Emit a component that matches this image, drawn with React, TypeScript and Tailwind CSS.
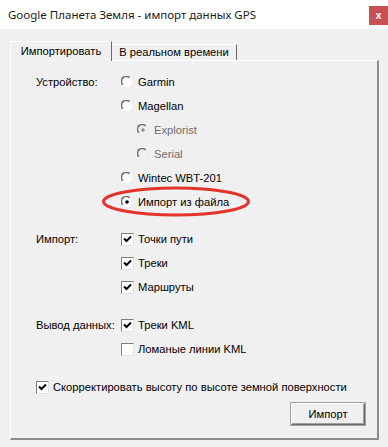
import React from "react";

const font = { fontFamily: '"Liberation Sans", Arial, sans-serif' };

function Radio({ checked = false, disabled = false }: { checked?: boolean; disabled?: boolean }) {
  return (
    <svg width="12" height="12" viewBox="0 0 12 12" className="shrink-0">
      <circle cx="6" cy="6" r="5.5" fill={disabled ? "#f0f0f0" : "#ffffff"} />
      {/* sunken edge: dark top-left, light bottom-right */}
      <path d="M1.2 9 A5.3 5.3 0 0 1 9 1.2" fill="none" stroke="#8a8a8a" strokeWidth="1" />
      <path d="M2 8.6 A4.4 4.4 0 0 1 8.6 2" fill="none" stroke="#404040" strokeWidth="1" />
      <path d="M10.8 3 A5.3 5.3 0 0 1 3 10.8" fill="none" stroke="#e3e3e3" strokeWidth="1" />
      {checked && <circle cx="6" cy="6" r="1.8" fill={disabled ? "#8d8d8d" : "#000000"} />}
    </svg>
  );
}

function Check({ checked = false }: { checked?: boolean }) {
  return (
    <span className="w-[13px] h-[13px] shrink-0 bg-white border border-t-[#808080] border-l-[#808080] border-r-[#e3e3e3] border-b-[#e3e3e3] flex items-center justify-center">
      {checked && (
        <svg width="9" height="9" viewBox="0 0 9 9">
          <path d="M1 3.5 L3.5 6 L8 1.5" fill="none" stroke="#000" strokeWidth="2" />
        </svg>
      )}
    </span>
  );
}

function RadioRow({
  label,
  checked,
  disabled,
  indent,
}: {
  label: string;
  checked?: boolean;
  disabled?: boolean;
  indent?: boolean;
}) {
  return (
    <div className={`h-6 flex items-center gap-[5px] whitespace-nowrap ${indent ? "pl-4" : ""}`}>
      <Radio checked={checked} disabled={disabled} />
      <span className={disabled ? "text-[#6d6d6d]" : "text-black"}>{label}</span>
    </div>
  );
}

function CheckRow({ label, checked }: { label: string; checked?: boolean }) {
  return (
    <div className="h-6 flex items-center gap-[4px] whitespace-nowrap">
      <Check checked={checked} />
      <span>{label}</span>
    </div>
  );
}

export default function App() {
  return (
    <div className="w-[388px] h-[447px] bg-[#f0f0f0] overflow-hidden text-[11.2px] text-black" style={font}>
      {/* Title bar */}
      <div className="h-[29px] bg-white flex items-start justify-between">
        <div
          className="pl-2 pt-[6px] text-[11.5px] text-[#1a1a1a] whitespace-nowrap"
          style={{ fontFamily: '"Noto Sans", "Open Sans", sans-serif' }}
        >
          Google Планета Земля - импорт данных GPS
        </div>
        <div className="mt-[6px] w-[19px] h-[19px] bg-[#c75050] flex items-center justify-center text-white text-[11px] font-bold leading-none">
          x
        </div>
      </div>

      <div className="pl-[10px] pr-[9px] pt-3">
        {/* Tabs */}
        <div className="flex items-end h-[19px]">
          <div className="relative z-10 h-[20px] w-[102px] -mb-px bg-[#f0f0f0] border-l border-t border-white border-r border-r-[#696969] flex items-center justify-center pb-px">
            Импортировать
          </div>
          <div className="h-[16px] w-[125px] border-t border-white border-r border-r-[#696969] flex items-center justify-center">
            В реальном времени
          </div>
        </div>

        {/* Panel */}
        <div className="h-[380px] border-l border-t border-white border-r-2 border-r-[#8c8c8c] border-b-2 border-b-[#8c8c8c] pl-[25px] pr-[11px] pt-[9px] flex flex-col">
          <div className="flex">
            <div className="w-[85px] h-6 flex items-center">Устройство:</div>
            <div className="flex flex-col">
              <RadioRow label="Garmin" />
              <RadioRow label="Magellan" />
              <RadioRow label="Explorist" checked disabled indent />
              <RadioRow label="Serial" disabled indent />
              <RadioRow label="Wintec WBT-201" />
              <div className="relative">
                <RadioRow label="Импорт из файла" checked />
                <svg
                  className="absolute left-[-20px] top-[-4px] pointer-events-none"
                  width="150"
                  height="31"
                  viewBox="0 0 150 31"
                >
                  <ellipse cx="75" cy="15.5" rx="72.5" ry="13.5" fill="none" stroke="#e2342d" strokeWidth="3" />
                </svg>
              </div>
            </div>
          </div>

          <div className="flex mt-[13px]">
            <div className="w-[85px] h-6 flex items-center">Импорт:</div>
            <div className="flex flex-col">
              <CheckRow label="Точки пути" checked />
              <CheckRow label="Треки" checked />
              <CheckRow label="Маршруты" checked />
            </div>
          </div>

          <div className="flex mt-[14px]">
            <div className="w-[85px] h-6 flex items-center whitespace-nowrap">Вывод данных:</div>
            <div className="flex flex-col">
              <CheckRow label="Треки KML" checked />
              <CheckRow label="Ломаные линии KML" />
            </div>
          </div>

          <div className="mt-[14px]">
            <CheckRow label="Скорректировать высоту по высоте земной поверхности" checked />
          </div>

          <div className="mt-1 flex justify-end pr-[1px]">
            <button className="w-[74px] h-[22px] bg-[#f0f0f0] border border-t-white border-l-white border-r-[#696969] border-b-[#696969] shadow-[inset_-1px_-1px_0_#a0a0a0,0_0_0_1px_#a0a0a0] flex items-center justify-center">
              Импорт
            </button>
          </div>
        </div>
      </div>
    </div>
  );
}
